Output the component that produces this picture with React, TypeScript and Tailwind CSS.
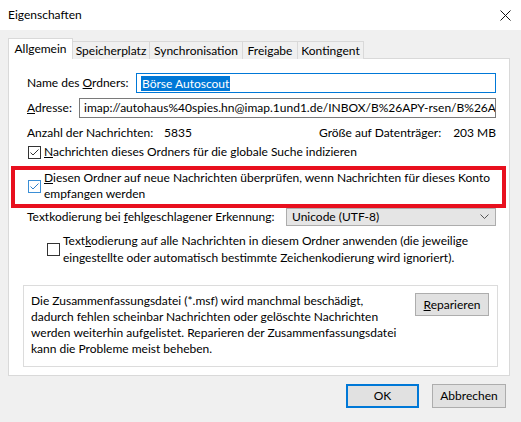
import React from "react";

const font = { fontFamily: 'Lato, "Noto Sans", Arial, sans-serif' };

function Check({ checked, accent }: { checked?: boolean; accent?: boolean }) {
  const border = accent ? "border-[#3b8fd6]" : "border-[#333333]";
  return (
    <span className={`flex h-[13px] w-[13px] shrink-0 items-center justify-center border bg-white ${border}`}>
      {checked && (
        <svg width="11" height="11" viewBox="0 0 11 11">
          <polyline
            points="1.5,5.5 4,8 9.5,2.5"
            fill="none"
            stroke={accent ? "#2f7fc9" : "#333333"}
            strokeWidth="1"
          />
        </svg>
      )}
    </span>
  );
}

function Tab({ label, w, active }: { label: string; w: number; active?: boolean }) {
  if (active) {
    return (
      <div
        className="flex h-[21px] items-start justify-center whitespace-nowrap border border-b-0 border-[#d9d9d9] bg-white pt-[2px] text-black"
        style={{ width: w }}
      >
        {label}
      </div>
    );
  }
  return (
    <div
      className="-ml-px flex h-[18px] items-start justify-center whitespace-nowrap border border-b-0 border-[#d9d9d9] bg-[#f0f0f0] pt-px text-black"
      style={{ width: w }}
    >
      {label}
    </div>
  );
}

export default function App() {
  return (
    <div
      className="relative h-[422px] w-[521px] overflow-hidden bg-[#f0f0f0] text-[12px] leading-[16px] text-black"
      style={font}
    >
      {/* title bar */}
      <div className="flex h-[30px] items-center justify-between bg-white pl-[8px] pr-[10px]">
        <span>Eigenschaften</span>
        <svg width="11" height="11" viewBox="0 0 11 11">
          <path d="M0.5 0.5 L10.5 10.5 M10.5 0.5 L0.5 10.5" stroke="#111" strokeWidth="1" />
        </svg>
      </div>

      {/* tabs */}
      <div className="relative z-10 mt-[8px] -mb-px ml-[8px] flex items-end">
        <Tab label="Allgemein" w={65} active />
        <Tab label="Speicherplatz" w={78} />
        <Tab label="Synchronisation" w={94} />
        <Tab label="Freigabe" w={56} />
        <Tab label="Kontingent" w={67} />
      </div>

      {/* page */}
      <div className="ml-[8px] h-[318px] w-[502px] border border-[#d9d9d9] bg-white pl-[18px] pr-[13px] pt-[14px]">
        <div className="flex h-[20px] items-center">
          <span className="w-[109px] shrink-0 whitespace-nowrap">
            Name des <u>O</u>rdners:
          </span>
          <div className="flex h-[20px] flex-1 items-center border border-[#0078d7] pl-[4px]">
            <span className="bg-[#0078d7] px-[1px] leading-[15px] text-white">Börse Autoscout</span>
          </div>
        </div>

        <div className="mt-[5px] flex h-[20px] items-center">
          <span className="w-[52px] shrink-0 whitespace-nowrap">
            <u>A</u>dresse:
          </span>
          <div className="flex h-[20px] min-w-0 flex-1 items-center overflow-hidden whitespace-nowrap border border-[#7a7a7a] pl-[4px]">
            imap://autohaus%40spies.hn@imap.1und1.de/INBOX/B%26APY-rsen/B%26A
          </div>
        </div>

        <div className="mt-[7px] flex h-[16px] items-center whitespace-nowrap">
          <span className="w-[137px] shrink-0">Anzahl der Nachrichten:</span>
          <span>5835</span>
          <span className="ml-auto">Größe auf Datenträger:</span>
          <span className="ml-[12px]">203 MB</span>
        </div>

        <div className="mt-[3px] flex h-[16px] items-center gap-[3px] pl-[1px] whitespace-nowrap">
          <Check checked />
          <span>
            <u>N</u>achrichten dieses Ordners für die globale Suche indizieren
          </span>
        </div>

        <div className="mt-[10px] flex items-center gap-[3px] pl-[1px] whitespace-nowrap">
          <Check checked accent />
          <span>
            <u>D</u>iesen Ordner auf neue Nachrichten überprüfen, wenn Nachrichten für dieses Konto
            <br />
            empfangen werden
          </span>
        </div>

        <div className="mt-[6px] flex h-[18px] items-center">
          <span className="w-[259px] shrink-0 whitespace-nowrap">
            Textkodierung bei <u>f</u>ehlgeschlagener Erkennung:
          </span>
          <div className="flex h-[18px] flex-1 items-center justify-between border border-[#adadad] bg-[#e5e5e5] pl-[5px] pr-[6px]">
            <span>Unicode (UTF-8)</span>
            <svg width="9" height="6" viewBox="0 0 9 6">
              <polyline points="0.5,0.5 4.5,4.5 8.5,0.5" fill="none" stroke="#555" strokeWidth="1" />
            </svg>
          </div>
        </div>

        <div className="mt-[6px] flex items-center gap-[3px] pl-[20px] whitespace-nowrap">
          <Check />
          <span className="leading-[17px]">
            Text<u>k</u>odierung auf alle Nachrichten in diesem Ordner anwenden (die jeweilige
            <br />
            eingestellte oder automatisch bestimmte Zeichenkodierung wird ignoriert).
          </span>
        </div>

        <div className="-ml-[4px] mt-[19px] flex h-[82px] w-[475px] items-start justify-between border border-[#dcdcdc] pl-[7px] pr-[8px] pt-[7px]">
          <p className="whitespace-nowrap">
            Die Zusammenfassungsdatei (*.msf) wird manchmal beschädigt,
            <br />
            dadurch fehlen scheinbar Nachrichten oder gelöschte Nachrichten
            <br />
            werden weiterhin aufgelistet. Reparieren der Zusammenfassungsdatei
            <br />
            kann die Probleme meist beheben.
          </p>
          <button className="flex h-[23px] w-[74px] items-center justify-center border border-[#adadad] bg-[#e1e1e1]">
            <span>
              <u>R</u>eparieren
            </span>
          </button>
        </div>
      </div>

      {/* dialog buttons */}
      <div className="mt-[8px] flex justify-end gap-[13px] pr-[15px]">
        <button className="flex h-[24px] w-[73px] items-center justify-center border-2 border-[#0078d7] bg-[#e1e1e1]">
          OK
        </button>
        <button className="flex h-[24px] w-[74px] items-center justify-center border border-[#adadad] bg-[#e1e1e1]">
          Abbrechen
        </button>
      </div>

      {/* highlight frame */}
      <div className="pointer-events-none absolute left-[11px] top-[166px] h-[42px] w-[495px] border-[4px] border-[#e8101e]" />
    </div>
  );
}
